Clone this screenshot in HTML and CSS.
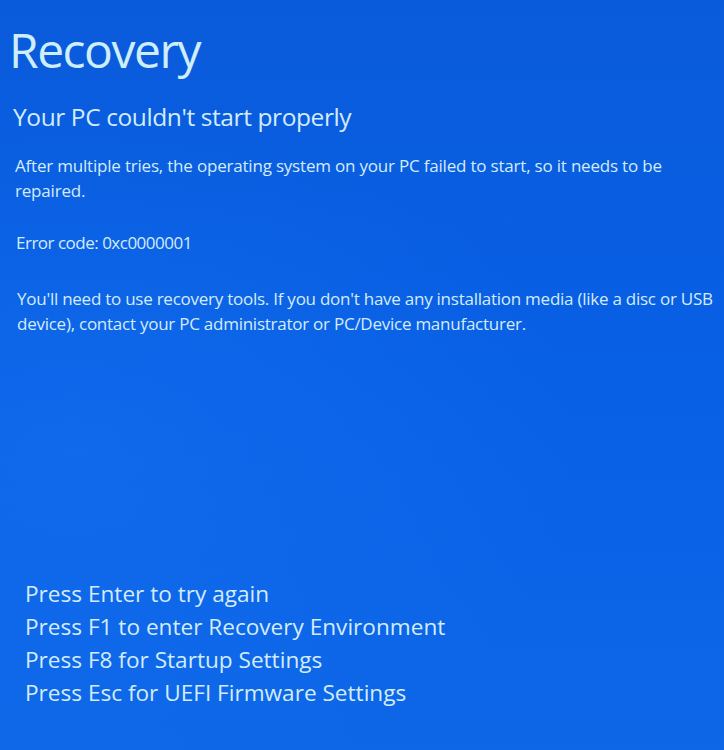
FILE: index.html
```html
<!DOCTYPE html>
<html lang="en">
<head>
<meta charset="utf-8">
<title>Recovery</title>
<link rel="stylesheet" href="styles.css">
</head>
<body>
<div class="screen">
  <div class="top">
    <h1 class="title">Recovery</h1>
    <h2 class="subtitle">Your PC couldn't start properly</h2>
    <p class="para first">After multiple tries, the operating system on your PC failed to start, so it needs to be repaired.</p>
    <p class="para err">Error code: 0xc0000001</p>
    <p class="para tools">You'll need to use recovery tools. If you don't have any installation media (like a disc or USB device), contact your PC administrator or PC/Device manufacturer.</p>
  </div>
  <ul class="options">
    <li>Press Enter to try again</li>
    <li>Press F1 to enter Recovery Environment</li>
    <li>Press F8 for Startup Settings</li>
    <li>Press Esc for UEFI Firmware Settings</li>
  </ul>
</div>
</body>
</html>
```

FILE: styles.css
```css
html, body {
  margin: 0;
  padding: 0;
}
body {
  width: 724px;
  height: 750px;
  overflow: hidden;
  font-family: "Open Sans", "Noto Sans", sans-serif;
  color: #d3ecfb;
}
.screen {
  width: 724px;
  height: 750px;
  box-sizing: border-box;
  display: flex;
  flex-direction: column;
  background:
    radial-gradient(ellipse at 10% 60%, rgba(30,120,245,0.35), rgba(30,120,245,0) 55%),
    linear-gradient(180deg, #0a5bdb 0%, #0860e5 50%, #0d67e7 100%);
}
.top {
  padding: 20px 0 0 9px;
}
.title {
  margin: 0;
  font-weight: 400;
  font-size: 48px;
  line-height: 60px;
  letter-spacing: -1.5px;
  color: #cdeefa;
}
.subtitle {
  margin: 21px 0 0 4px;
  font-weight: 400;
  font-size: 24.5px;
  line-height: 32px;
  letter-spacing: -0.4px;
}
.para {
  margin: 0 0 0 6px;
  width: 706px;
  font-size: 17px;
  line-height: 25px;
  letter-spacing: -0.2px;
}
.para.first {
  margin-top: 20px;
}
.para.err {
  margin-top: 27px;
  margin-left: 7px;
  letter-spacing: -0.5px;
}
.para.tools {
  margin-top: 31px;
  margin-left: 8px;
  letter-spacing: -0.25px;
}
.options {
  list-style: none;
  margin: auto 0 41px 25px;
  padding: 0;
}
.options li {
  font-size: 22.6px;
  line-height: 33px;
}
```
